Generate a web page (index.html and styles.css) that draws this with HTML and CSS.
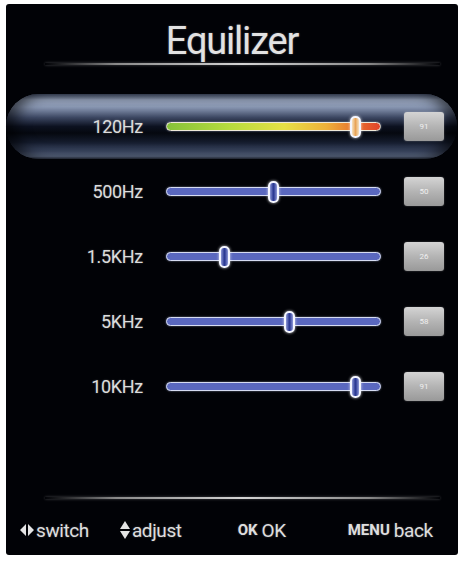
FILE: index.html
```html
<!DOCTYPE html>
<html>
<head>
<meta charset="utf-8">
<title>Equilizer</title>
<link rel="stylesheet" href="styles.css">
</head>
<body>
<div class="panel">
  <h1 class="title">Equilizer</h1>
  <div class="rule"></div>

  <div class="bands">
    <div class="band selected">
      <span class="label">120Hz</span>
      <div class="track warm">
        <div class="rail"><span class="thumb" style="left: 91%"></span></div>
      </div>
      <span class="value">91</span>
    </div>
    <div class="band">
      <span class="label">500Hz</span>
      <div class="track">
        <div class="rail"><span class="thumb" style="left: 50%"></span></div>
      </div>
      <span class="value">50</span>
    </div>
    <div class="band">
      <span class="label">1.5KHz</span>
      <div class="track">
        <div class="rail"><span class="thumb" style="left: 26%"></span></div>
      </div>
      <span class="value">26</span>
    </div>
    <div class="band">
      <span class="label">5KHz</span>
      <div class="track">
        <div class="rail"><span class="thumb" style="left: 58%"></span></div>
      </div>
      <span class="value">58</span>
    </div>
    <div class="band">
      <span class="label">10KHz</span>
      <div class="track">
        <div class="rail"><span class="thumb" style="left: 91%"></span></div>
      </div>
      <span class="value">91</span>
    </div>
  </div>

  <div class="rule footer-rule"></div>
  <div class="hints">
    <span class="hint hint-switch">
      <svg class="icon lr" viewBox="0 0 14 12" width="14" height="12"><path d="M6 0 L0 6 L6 12 Z M8 0 L14 6 L8 12 Z" fill="#e4e4e4"/></svg>switch
    </span>
    <span class="hint hint-adjust">
      <svg class="icon ud" viewBox="0 0 10 18" width="10" height="18"><path d="M5 0 L10 8 L0 8 Z M0 10 L10 10 L5 18 Z" fill="#e4e4e4"/></svg>adjust
    </span>
    <span class="hint hint-ok"><b class="key">OK</b> OK</span>
    <span class="hint hint-menu"><b class="key">MENU</b> back</span>
  </div>
</div>
</body>
</html>
```
FILE: styles.css
```css
html, body {
  margin: 0;
  padding: 0;
  background: #ffffff;
}

body {
  width: 465px;
  height: 562px;
  overflow: hidden;
  font-family: Roboto, "Liberation Sans", sans-serif;
}

.panel {
  margin: 4px 7px 0 6px;
  width: 452px;
  height: 551px;
  background: #010206;
  border-radius: 3px;
  display: flex;
  flex-direction: column;
  color: #d9d9d9;
}

.title {
  margin: 0;
  padding-top: 17px;
  height: 41px;
  line-height: 41px;
  font-size: 38px;
  font-weight: 400;
  letter-spacing: -1.2px;
  text-align: center;
  color: #e2e2e2;
  text-shadow: 0 0 2px rgba(255, 255, 255, 0.35);
}

.rule {
  margin: 1px 18px 0 39px;
  height: 2px;
  background: linear-gradient(90deg, rgba(120,120,120,0) 0%, #8a8a8a 18%, #d4d4d4 50%, #8a8a8a 82%, rgba(120,120,120,0) 100%);
  box-shadow: 0 0 3px rgba(200, 200, 200, 0.4);
}

.bands {
  margin-top: 29px;
  display: flex;
  flex-direction: column;
}

.band {
  height: 65px;
  display: grid;
  grid-template-columns: 137px 215px 40px;
  column-gap: 23px;
  align-items: center;
  border-radius: 33px;
}

.band.selected {
  margin-right: 1px;
  background: linear-gradient(180deg,
    #5e6c8c 0%,
    #a2b0ca 9%,
    #8c9ab6 20%,
    #3c4762 36%,
    #0c1120 50%,
    #05080f 60%,
    #141b2c 74%,
    #3e4a66 88%,
    #7080a0 96%,
    #3a4358 100%);
  box-shadow: inset 10px 0 14px rgba(0, 0, 0, 0.55), inset -10px 0 14px rgba(0, 0, 0, 0.55);
}

.label {
  text-align: right;
  font-size: 18px;
  letter-spacing: -0.3px;
  color: #dcdcdc;
  text-shadow: 0 0 2px rgba(255, 255, 255, 0.3);
}

.track {
  position: relative;
  height: 7px;
  border: 1.5px solid #d6dcf2;
  border-radius: 6px;
  background: #5a68bf;
  box-shadow: 0 0 2px rgba(210, 220, 255, 0.6);
}

.track.warm {
  border-color: #eee8d8;
  background: linear-gradient(90deg, #86c23a 0%, #b8dc3e 30%, #e6e046 55%, #eeb03a 75%, #e86a2c 90%, #e0442a 100%);
}

/* travel range of the thumb centre inside the track */
.rail {
  position: absolute;
  top: 0;
  bottom: 0;
  left: 5.5px;
  right: 6.5px;
}

.thumb {
  position: absolute;
  top: 50%;
  width: 7px;
  height: 18px;
  margin-left: -5.5px;
  transform: translateY(-50%);
  border: 2px solid #f4f6ff;
  border-radius: 5px;
  background: linear-gradient(90deg, #8f9ad8 0%, #2c3a94 45%, #2c3a94 55%, #8f9ad8 100%);
  box-shadow: 0 0 3px rgba(255, 255, 255, 0.8);
}

.track.warm .thumb {
  background: linear-gradient(90deg, #f6e2c0 0%, #e8a458 50%, #f6e2c0 100%);
}

.value {
  height: 29px;
  line-height: 29px;
  border-radius: 3px;
  background: linear-gradient(180deg, #d4d4d4 0%, #b4b4b4 50%, #999999 100%);
  box-shadow: 0 0 2px rgba(255, 255, 255, 0.3);
  text-align: center;
  font-size: 8px;
  color: #f0f0f0;
}

.footer-rule {
  margin-top: auto;
}

.hints {
  height: 50px;
  display: flex;
  align-items: center;
  padding-left: 14px;
  padding-top: 6px;
  font-size: 19px;
  letter-spacing: -0.4px;
  color: #dedede;
  text-shadow: 0 0 2px rgba(255, 255, 255, 0.3);
}

.hint {
  display: flex;
  align-items: center;
  white-space: nowrap;
}

.icon {
  margin-right: 2px;
}

.hint-adjust {
  margin-left: 31px;
}

.hint-ok {
  margin-left: 56px;
}

.hint-menu {
  margin-left: 62px;
}

.key {
  font-weight: 700;
  font-size: 15px;
  margin-right: 4px;
  letter-spacing: 0;
}
```
